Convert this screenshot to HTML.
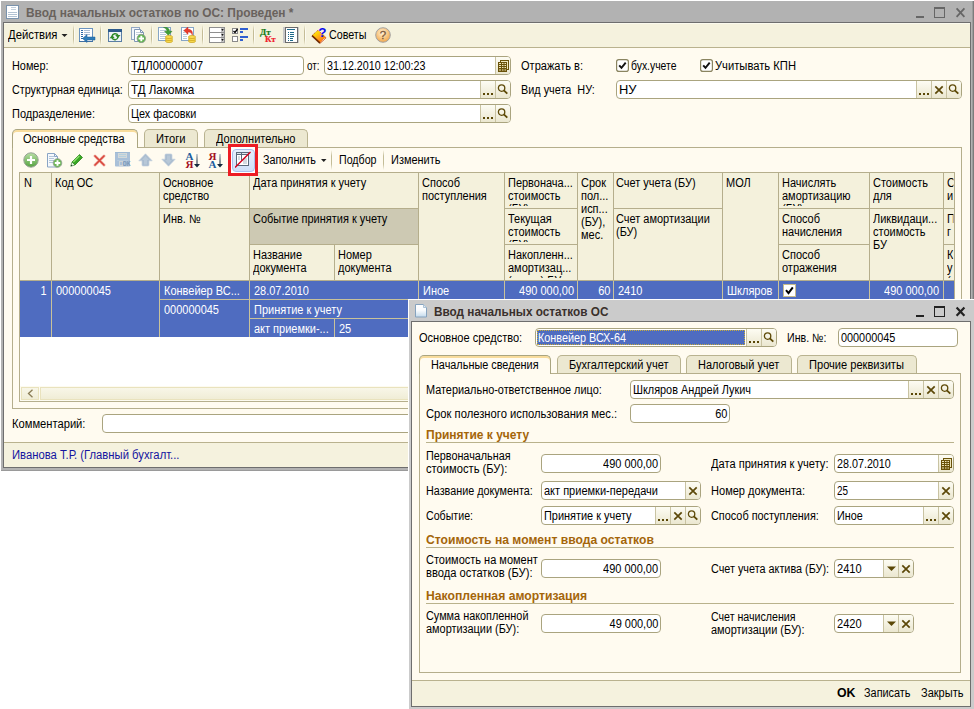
<!DOCTYPE html>
<html lang="ru"><head><meta charset="utf-8"><title>Ввод начальных остатков по ОС</title>
<style>
html,body{margin:0;padding:0;background:#fff;}
body{width:974px;height:709px;position:relative;overflow:hidden;font-family:"Liberation Sans",sans-serif;font-size:12px;color:#000;}
.t{position:absolute;white-space:nowrap;line-height:14px;height:14px;transform-origin:0 0;}
.b{font-weight:bold;}
.f{position:absolute;background:#fff;border:1px solid #aaa47f;border-radius:4px;}
.fb{position:absolute;border-left:1px solid #c9c3a2;background:linear-gradient(#fdfcf3,#ebe7d0);overflow:hidden;}
.fb svg{display:block;}
.h{position:absolute;background:#f4f1dc;}
.ml{position:absolute;line-height:13px;transform-origin:0 0;transform:scaleX(0.915);white-space:nowrap;overflow:hidden;}
.vl{position:absolute;width:1px;background:#b5ae8c;}
.hl{position:absolute;height:1px;background:#b5ae8c;}
.tab{position:absolute;border:1px solid #b9b390;border-bottom:none;border-radius:5px 5px 0 0;background:#ece8d1;}
.tab.a{background:#fffbf0;border-color:#aaa580;box-shadow:inset 0 2px 0 #f8dc9c;}
.pn{position:absolute;border:1px solid #b5ae8c;}
.hd{color:#a4650a;font-weight:bold;}
</style></head><body>

<div class="" style="position:absolute;left:1px;top:1px;width:973px;height:470px;background:#b2b2b2;"></div>
<div class="" style="position:absolute;left:1px;top:470px;width:973px;height:1px;background:#9a9a9a;"></div>
<div class="" style="position:absolute;left:972px;top:1px;width:1px;height:470px;background:#9c9c9c;"></div>
<div class="" style="position:absolute;left:973px;top:1px;width:1px;height:470px;background:#7c7c7c;"></div>
<div class="" style="position:absolute;left:3px;top:22px;width:968px;height:446px;background:#fffbf0;border:1px solid #6e6e6e;box-sizing:border-box;"></div>
<svg style="position:absolute;left:6px;top:5px" width="14" height="15" viewBox="0 0 14 15"><rect x="0.500" y="0.500" width="12" height="13" fill="#fff" stroke="#7a93ad"/><rect x="5" y="2" width="5" height="1" fill="#c3d0dc"/><rect x="5" y="4" width="5" height="1" fill="#c3d0dc"/><rect x="2" y="7" width="9" height="1" fill="#b3c3d3"/><rect x="2" y="9" width="9" height="1" fill="#b3c3d3"/><rect x="2" y="11" width="9" height="1" fill="#b3c3d3"/></svg>
<div class="t b" style="left:26px;top:6px;transform:scaleX(0.991);color:#69625d;">Ввод начальных остатков по ОС: Проведен *</div>
<svg style="position:absolute;left:914px;top:7px" width="56" height="14" viewBox="0 0 56 14"><rect x="2" y="9" width="8" height="2" fill="#666"/><rect x="20.500" y="0.500" width="10" height="10" fill="none" stroke="#666"/><rect x="20" y="0" width="11" height="2" fill="#666"/><path d="M42.600 1.400 L50.400 9.800 M50.400 1.400 L42.600 9.800" stroke="#666" stroke-width="1.8" fill="none"/></svg>
<div class="" style="position:absolute;left:4px;top:23px;width:966px;height:24px;background:#f5f2de;border-top:1px solid #fbfaee;box-sizing:border-box;"></div>
<div class="" style="position:absolute;left:4px;top:47px;width:966px;height:1px;background:#b9b28e;"></div>
<div class="t " style="left:8px;top:28px;transform:scaleX(0.941);">Действия</div>
<svg style="position:absolute;left:61px;top:34px" width="7" height="4"><path d="M0.500 0h6L3.500 3z" fill="#222"/></svg>
<div class="" style="position:absolute;left:73px;top:25px;width:1px;height:20px;background:linear-gradient(rgba(190,182,140,0),#c4bc96 30%,#c4bc96 70%,rgba(190,182,140,0));"></div>
<div class="" style="position:absolute;left:74px;top:25px;width:1px;height:20px;background:linear-gradient(rgba(255,255,255,0),#fdfcf4 30%,#fdfcf4 70%,rgba(255,255,255,0));"></div>
<svg style="position:absolute;left:79px;top:28px" width="17" height="15" viewBox="0 0 17 15"><rect x="0.500" y="0.500" width="13" height="13" fill="#fff" stroke="#6a93bf"/><rect x="0" y="13" width="14" height="1" fill="#3f6fa3"/><rect x="2" y="2" width="2" height="1" fill="#2c6aa8"/><rect x="2" y="4" width="2" height="1" fill="#2c6aa8"/><rect x="2" y="6" width="2" height="1" fill="#2c6aa8"/><rect x="2" y="8" width="2" height="1" fill="#2c6aa8"/><rect x="2" y="10" width="2" height="1" fill="#2c6aa8"/><rect x="5" y="2" width="6" height="1" fill="#a9bdd3"/><rect x="5" y="4" width="6" height="1" fill="#a9bdd3"/><rect x="5" y="6" width="6" height="1" fill="#a9bdd3"/><path d="M16 9v3h-8v2.500l-4.500-4 4.500-4v2.500z" fill="#2f7db8" stroke="#1f5f98" stroke-width="0.500"/></svg>
<div class="" style="position:absolute;left:100px;top:25px;width:1px;height:20px;background:linear-gradient(rgba(190,182,140,0),#c4bc96 30%,#c4bc96 70%,rgba(190,182,140,0));"></div>
<div class="" style="position:absolute;left:101px;top:25px;width:1px;height:20px;background:linear-gradient(rgba(255,255,255,0),#fdfcf4 30%,#fdfcf4 70%,rgba(255,255,255,0));"></div>
<svg style="position:absolute;left:108px;top:29px" width="14" height="13" viewBox="0 0 14 13"><rect x="0.500" y="0.500" width="13" height="12" fill="#edf3f9" stroke="#5b7fa5"/><rect x="0" y="0" width="14" height="3" fill="#2c5a8c"/><path d="M4 7.500a3.200 3.200 0 0 1 6-1" fill="none" stroke="#2f8a2a" stroke-width="1.500"/><path d="M10 8a3.200 3.200 0 0 1-6 1" fill="none" stroke="#2f8a2a" stroke-width="1.500"/><path d="M7.200 6h5.300l-2.600 3.200z" fill="#2f8a2a"/><path d="M1.500 9.300h5.300l-2.600-3.200z" fill="#2f8a2a"/></svg>
<svg style="position:absolute;left:131px;top:27px" width="15" height="16" viewBox="0 0 15 16"><rect x="0.500" y="0.500" width="8" height="12" fill="#f1f5fa" stroke="#93a8c4"/><path d="M3.500 2.500h6l3 3v9h-9z" fill="#fff" stroke="#7f97b5"/><path d="M9.500 2.500v3h3" fill="none" stroke="#7f97b5"/><rect x="5" y="5" width="4" height="1" fill="#c5d0dd"/><rect x="5" y="7" width="4" height="1" fill="#c5d0dd"/><circle cx="10.300" cy="11.500" r="4.200" fill="#5db44a" stroke="#8b9a8b" stroke-width="0.900"/><path d="M10.300 8.800v5.400M7.600 11.500h5.400" stroke="#fff" stroke-width="1.900"/></svg>
<div class="" style="position:absolute;left:151px;top:25px;width:1px;height:20px;background:linear-gradient(rgba(190,182,140,0),#c4bc96 30%,#c4bc96 70%,rgba(190,182,140,0));"></div>
<div class="" style="position:absolute;left:152px;top:25px;width:1px;height:20px;background:linear-gradient(rgba(255,255,255,0),#fdfcf4 30%,#fdfcf4 70%,rgba(255,255,255,0));"></div>
<svg style="position:absolute;left:158px;top:27px" width="16" height="16" viewBox="0 0 16 16"><rect x="0.500" y="0.500" width="12" height="13" fill="#fff" stroke="#86a5c6"/><rect x="2" y="3" width="6" height="1" fill="#b9cadb"/><rect x="2" y="5" width="6" height="1" fill="#b9cadb"/><rect x="2" y="7" width="6" height="1" fill="#b9cadb"/><rect x="2" y="9" width="6" height="1" fill="#b9cadb"/><rect x="2" y="11" width="6" height="1" fill="#b9cadb"/><path d="M5.500 0.300c4.500-0.300 6 1.800 6 4h2.500l-3.700 4-3.700-4h2.300c0-1.500-1-3-3.400-4z" fill="#3f9e36" stroke="#2a7a22" stroke-width="0.500"/><ellipse cx="11" cy="14" rx="3.600" ry="1.600" fill="#f8da4e" stroke="#c9a11a" stroke-width="0.700"/><ellipse cx="11" cy="12" rx="3.600" ry="1.600" fill="#f8da4e" stroke="#c9a11a" stroke-width="0.700"/><ellipse cx="11" cy="10" rx="3.600" ry="1.600" fill="#f8da4e" stroke="#c9a11a" stroke-width="0.700"/></svg>
<svg style="position:absolute;left:181px;top:27px" width="16" height="16" viewBox="0 0 16 16"><rect x="0.500" y="0.500" width="12" height="13" fill="#fff" stroke="#86a5c6"/><rect x="2" y="7" width="4" height="1" fill="#b9cadb"/><rect x="2" y="9" width="4" height="1" fill="#b9cadb"/><rect x="2" y="11" width="4" height="1" fill="#b9cadb"/><rect x="2" y="3" width="2" height="1" fill="#b9cadb"/><rect x="2" y="5" width="2" height="1" fill="#b9cadb"/><path d="M2.800 3.600l4.200-3.600v2.300c3.500 0 5 2.200 4.300 6c-0.600-2.200-1.800-3.200-4.300-3.200v2.400z" fill="#e83a2c" stroke="#c02015" stroke-width="0.400"/><ellipse cx="11" cy="14" rx="3.600" ry="1.600" fill="#f8da4e" stroke="#c9a11a" stroke-width="0.700"/><ellipse cx="11" cy="12" rx="3.600" ry="1.600" fill="#f8da4e" stroke="#c9a11a" stroke-width="0.700"/><ellipse cx="11" cy="10" rx="3.600" ry="1.600" fill="#f8da4e" stroke="#c9a11a" stroke-width="0.700"/></svg>
<div class="" style="position:absolute;left:202px;top:25px;width:1px;height:20px;background:linear-gradient(rgba(190,182,140,0),#c4bc96 30%,#c4bc96 70%,rgba(190,182,140,0));"></div>
<div class="" style="position:absolute;left:203px;top:25px;width:1px;height:20px;background:linear-gradient(rgba(255,255,255,0),#fdfcf4 30%,#fdfcf4 70%,rgba(255,255,255,0));"></div>
<svg style="position:absolute;left:209px;top:27px" width="16" height="16" viewBox="0 0 16 16"><rect x="0" y="0" width="16" height="16" fill="#8f8f8f"/><rect x="1" y="1" width="11" height="4" fill="#fff"/><rect x="12" y="1" width="3" height="4" fill="#c4c4c4"/><path d="M12.300 2h2.400l-1.200 2z" fill="#111"/><rect x="1" y="6" width="11" height="4" fill="#fff"/><rect x="12" y="6" width="3" height="4" fill="#c4c4c4"/><path d="M12.300 7h2.400l-1.200 2z" fill="#111"/><rect x="1" y="11" width="11" height="4" fill="#fff"/><rect x="12" y="11" width="3" height="4" fill="#c4c4c4"/><path d="M12.300 12h2.400l-1.200 2z" fill="#111"/></svg>
<svg style="position:absolute;left:232px;top:28px" width="17" height="14" viewBox="0 0 17 14"><rect x="0.500" y="0.500" width="5" height="5" fill="#fff" stroke="#8a8a8a"/><path d="M1.500 3l1.500 1.500 2.500-3.500" stroke="#000" stroke-width="1.300" fill="none"/><rect x="0.500" y="8.500" width="5" height="5" fill="#fff" stroke="#8a8a8a"/><rect x="8" y="0" width="8" height="2" fill="#2f5fd0"/><rect x="8" y="3" width="3" height="2" fill="#2f5fd0"/><rect x="8" y="8" width="8" height="2" fill="#2f5fd0"/><rect x="8" y="11" width="3" height="2" fill="#2f5fd0"/></svg>
<div class="" style="position:absolute;left:253px;top:25px;width:1px;height:20px;background:linear-gradient(rgba(190,182,140,0),#c4bc96 30%,#c4bc96 70%,rgba(190,182,140,0));"></div>
<div class="" style="position:absolute;left:254px;top:25px;width:1px;height:20px;background:linear-gradient(rgba(255,255,255,0),#fdfcf4 30%,#fdfcf4 70%,rgba(255,255,255,0));"></div>
<svg style="position:absolute;left:259px;top:27px" width="18" height="16" viewBox="0 0 18 16"><text x="1" y="8" font-family="Liberation Serif, serif" font-weight="bold" font-size="9" fill="#157a18" stroke="#157a18" stroke-width="0.200">Дт</text><text x="6" y="15" font-family="Liberation Serif, serif" font-weight="bold" font-size="9" fill="#f0202c" stroke="#f0202c" stroke-width="0.200">Кт</text></svg>
<svg style="position:absolute;left:283px;top:27px" width="16" height="16" viewBox="0 0 16 16"><rect x="0" y="0" width="16" height="16" fill="#c9c9c9"/><rect x="2.500" y="0.500" width="12" height="15" fill="#fff" stroke="#6a6a6a"/><rect x="4" y="2" width="8" height="1" fill="#1f6a8a"/><rect x="7" y="5" width="4" height="1" fill="#1f6a8a"/><rect x="7" y="7" width="4" height="1" fill="#1f6a8a"/><rect x="7" y="9" width="4" height="1" fill="#1f6a8a"/><rect x="7" y="11" width="3" height="1" fill="#1f6a8a"/><rect x="7" y="13" width="3" height="1" fill="#1f6a8a"/><rect x="5" y="5" width="1" height="1" fill="#1f6a8a"/><rect x="5" y="7" width="1" height="1" fill="#1f6a8a"/><rect x="5" y="9" width="1" height="1" fill="#1f6a8a"/><rect x="5" y="11" width="1" height="1" fill="#1f6a8a"/><rect x="5" y="13" width="1" height="1" fill="#1f6a8a"/></svg>
<div class="" style="position:absolute;left:304px;top:25px;width:1px;height:20px;background:linear-gradient(rgba(190,182,140,0),#c4bc96 30%,#c4bc96 70%,rgba(190,182,140,0));"></div>
<div class="" style="position:absolute;left:305px;top:25px;width:1px;height:20px;background:linear-gradient(rgba(255,255,255,0),#fdfcf4 30%,#fdfcf4 70%,rgba(255,255,255,0));"></div>
<svg style="position:absolute;left:311px;top:26px" width="16" height="18" viewBox="0 0 16 18"><defs><linearGradient id="bk" x1="0.2" y1="0.1" x2="0.8" y2="0.9"><stop offset="0" stop-color="#fff200"/><stop offset="0.5" stop-color="#ffa818"/><stop offset="1" stop-color="#ff6a10"/></linearGradient></defs><path d="M7 4.200L1 9.500l8 7.500 6-5.500z" fill="url(#bk)" stroke="#c8501a" stroke-width="0.800" stroke-dasharray="1.200 0.800"/><path d="M1 9.700l8 7.500" stroke="#6e2800" stroke-width="1.600"/><path d="M10 16.600l5-4.600" stroke="#fff" stroke-width="1.400" stroke-dasharray="1 0.700"/><path d="M9.200 17.400l6-5.500" stroke="#c8501a" stroke-width="0.700"/><text x="7.300" y="10.800" font-family="Liberation Sans, sans-serif" font-weight="bold" font-size="13.500" fill="#0a0aee">?</text></svg>
<div class="t " style="left:329px;top:28px;transform:scaleX(0.893);">Советы</div>
<svg style="position:absolute;left:375px;top:27px" width="16" height="16" viewBox="0 0 16 16"><defs><radialGradient id="hg" cx="0.45" cy="0.35" r="0.75"><stop offset="0" stop-color="#fff2d8"/><stop offset="0.55" stop-color="#f8c27a"/><stop offset="1" stop-color="#ec9c3c"/></radialGradient></defs><circle cx="8" cy="8" r="7.300" fill="url(#hg)" stroke="#a3a3a3" stroke-width="1"/><text x="8" y="12" text-anchor="middle" font-family="Liberation Sans, sans-serif" font-size="11.500" fill="#7c5a3c" stroke="#7c5a3c" stroke-width="0.300">?</text></svg>
<div class="t " style="left:12px;top:59px;transform:scaleX(0.906);">Номер:</div>
<div class="f" style="left:128px;top:56px;width:174px;height:17px"></div>
<div class="t " style="left:131px;top:59px;transform:scaleX(0.943);">ТДЛ00000007</div>
<div class="t " style="left:307px;top:59px;transform:scaleX(0.82);">от:</div>
<div class="f" style="left:324px;top:56px;width:185px;height:17px"></div>
<div class="fb" style="left:495px;top:57px;width:14px;height:17px;border-radius:0 3px 3px 0;"><svg width="14" height="17" viewBox="0 0 14 17"><rect x="4.500" y="3.500" width="8" height="9" fill="#efe6bb" stroke="#6a5208"/><rect x="2.500" y="5.500" width="8" height="9" fill="#efe6bb" stroke="#6a5208"/><path d="M2.500 7.500h8M2.500 9.500h8M2.500 11.500h8M2.500 13h8M5.500 5.500v9M8 5.500v9" stroke="#6a5208" stroke-width="1"/></svg></div>
<div class="t " style="left:327px;top:59px;transform:scaleX(0.894);">31.12.2010 12:00:23</div>
<div class="t " style="left:521px;top:59px;transform:scaleX(0.92);">Отражать в:</div>
<svg style="position:absolute;left:616px;top:59px" width="13" height="13" viewBox="0 0 13 13"><rect x="0.600" y="0.600" width="11.800" height="11.800" rx="2.200" fill="#fff" stroke="#8a8460" stroke-width="1.200"/><path d="M3.200 6.300l2.300 2.600 4.200-5.200" stroke="#111" stroke-width="1.900" fill="none"/></svg>
<div class="t " style="left:631px;top:59px;transform:scaleX(0.866);">бух.учете</div>
<svg style="position:absolute;left:700px;top:59px" width="13" height="13" viewBox="0 0 13 13"><rect x="0.600" y="0.600" width="11.800" height="11.800" rx="2.200" fill="#fff" stroke="#8a8460" stroke-width="1.200"/><path d="M3.200 6.300l2.300 2.600 4.200-5.200" stroke="#111" stroke-width="1.900" fill="none"/></svg>
<div class="t " style="left:715px;top:59px;transform:scaleX(0.934);">Учитывать КПН</div>
<div class="t " style="left:12px;top:83px;transform:scaleX(0.896);">Структурная единица:</div>
<div class="f" style="left:128px;top:80px;width:381px;height:17px"></div>
<div class="fb" style="left:480px;top:81px;width:14px;height:17px;"><svg width="14" height="17" viewBox="0 0 14 17"><rect x="2" y="12" width="2" height="2" fill="#5a4706"/><rect x="6" y="12" width="2" height="2" fill="#5a4706"/><rect x="10" y="12" width="2" height="2" fill="#5a4706"/></svg></div>
<div class="fb" style="left:495px;top:81px;width:14px;height:17px;border-radius:0 3px 3px 0;"><svg width="14" height="17" viewBox="0 0 14 17"><circle cx="5.600" cy="7.100" r="3.200" stroke="#5e4a08" stroke-width="1.300" fill="none"/><path d="M7.800 9.400 L11.300 12.600" stroke="#5e4a08" stroke-width="1.900"/></svg></div>
<div class="t " style="left:131px;top:83px;transform:scaleX(0.966);">ТД Лакомка</div>
<div class="t " style="left:521px;top:83px;transform:scaleX(0.904);">Вид учета&nbsp; НУ:</div>
<div class="f" style="left:616px;top:80px;width:344px;height:17px"></div>
<div class="fb" style="left:916px;top:81px;width:14px;height:17px;"><svg width="14" height="17" viewBox="0 0 14 17"><rect x="2" y="12" width="2" height="2" fill="#5a4706"/><rect x="6" y="12" width="2" height="2" fill="#5a4706"/><rect x="10" y="12" width="2" height="2" fill="#5a4706"/></svg></div>
<div class="fb" style="left:931px;top:81px;width:14px;height:17px;"><svg width="14" height="17" viewBox="0 0 14 17"><path d="M3.300 5.300 L10.700 12.700 M10.700 5.300 L3.300 12.700" stroke="#5c4808" stroke-width="1.700" fill="none"/></svg></div>
<div class="fb" style="left:946px;top:81px;width:14px;height:17px;border-radius:0 3px 3px 0;"><svg width="14" height="17" viewBox="0 0 14 17"><circle cx="5.600" cy="7.100" r="3.200" stroke="#5e4a08" stroke-width="1.300" fill="none"/><path d="M7.800 9.400 L11.300 12.600" stroke="#5e4a08" stroke-width="1.900"/></svg></div>
<div class="t " style="left:619px;top:83px;transform:scaleX(1.074);">НУ</div>
<div class="t " style="left:12px;top:107px;transform:scaleX(0.914);">Подразделение:</div>
<div class="f" style="left:128px;top:104px;width:381px;height:17px"></div>
<div class="fb" style="left:480px;top:105px;width:14px;height:17px;"><svg width="14" height="17" viewBox="0 0 14 17"><rect x="2" y="12" width="2" height="2" fill="#5a4706"/><rect x="6" y="12" width="2" height="2" fill="#5a4706"/><rect x="10" y="12" width="2" height="2" fill="#5a4706"/></svg></div>
<div class="fb" style="left:495px;top:105px;width:14px;height:17px;border-radius:0 3px 3px 0;"><svg width="14" height="17" viewBox="0 0 14 17"><circle cx="5.600" cy="7.100" r="3.200" stroke="#5e4a08" stroke-width="1.300" fill="none"/><path d="M7.800 9.400 L11.300 12.600" stroke="#5e4a08" stroke-width="1.900"/></svg></div>
<div class="t " style="left:131px;top:107px;transform:scaleX(0.902);">Цех фасовки</div>
<div class="pn" style="left:12px;top:147px;width:948px;height:260px"></div>
<div class="tab" style="left:144px;top:129px;width:52px;height:17px"></div>
<div class="t " style="left:156px;top:132px;transform:scaleX(0.929);">Итоги</div>
<div class="tab" style="left:204px;top:129px;width:102px;height:17px"></div>
<div class="t " style="left:216px;top:132px;transform:scaleX(0.92);">Дополнительно</div>
<div class="tab a" style="left:12px;top:129px;width:124px;height:18px"></div>
<div class="t " style="left:23px;top:132px;transform:scaleX(0.918);">Основные средства</div>
<svg style="position:absolute;left:23px;top:152px" width="16" height="16" viewBox="0 0 16 16"><defs><linearGradient id="gp" x1="0" y1="0" x2="0" y2="1"><stop offset="0" stop-color="#b9e0a6"/><stop offset="1" stop-color="#55a23f"/></linearGradient></defs><circle cx="8" cy="8" r="7.200" fill="url(#gp)" stroke="#98a296" stroke-width="1"/><path d="M8 4v8M4 8h8" stroke="#fff" stroke-width="2.200"/></svg>
<svg style="position:absolute;left:47px;top:153px" width="16" height="15" viewBox="0 0 16 15"><path d="M0.500 0.500h7l3 3v10.500h-10z" fill="#f6f9fc" stroke="#8aa5c5"/><path d="M7.500 0.500v3h3" fill="none" stroke="#8aa5c5"/><rect x="2" y="3" width="5" height="1" fill="#b4c6da"/><rect x="2" y="5" width="5" height="1" fill="#b4c6da"/><rect x="2" y="7" width="5" height="1" fill="#b4c6da"/><rect x="2" y="9" width="5" height="1" fill="#b4c6da"/><circle cx="10.500" cy="10" r="4.300" fill="#6cb856" stroke="#93a093" stroke-width="0.900"/><path d="M10.500 7.300v5.400M7.800 10h5.400" stroke="#fff" stroke-width="1.900"/></svg>
<svg style="position:absolute;left:70px;top:154px" width="13" height="13" viewBox="0 0 13 13"><path d="M9.500 0.500l3 3-7.500 7.500-3-3z" fill="#38a723" stroke="#1d7a10" stroke-width="0.700"/><path d="M2 8l3 3-4.200 1.200z" fill="#e9f5e4" stroke="#1d7a10" stroke-width="0.600"/><path d="M0.800 12.200l1.500-0.400-1-1z" fill="#123"/><path d="M9.300 2l-6 6" stroke="#8fe070" stroke-width="1.200"/></svg>
<svg style="position:absolute;left:93px;top:154px" width="13" height="13" viewBox="0 0 13 13"><path d="M2 2l9 9M11 2l-9 9" stroke="#e8867c" stroke-width="3" stroke-linecap="round" opacity="0.550"/><path d="M2 2l9 9M11 2l-9 9" stroke="#d9463c" stroke-width="1.700" stroke-linecap="round"/></svg>
<svg style="position:absolute;left:115px;top:152px" width="16" height="15" viewBox="0 0 16 15"><rect x="0" y="0" width="15" height="14.500" rx="0.800" fill="#a9c0d8"/><rect x="0" y="0" width="15" height="1" fill="#9fbad4"/><rect x="3" y="1" width="9" height="5" fill="#d3d8d9"/><rect x="4" y="2" width="7" height="1" fill="#b5d0de"/><rect x="4" y="4" width="7" height="1" fill="#b5d0de"/><rect x="2" y="8" width="11" height="1" fill="#b5c9dc"/><rect x="4" y="9" width="4" height="5" fill="#cfd5d8"/><rect x="5" y="10" width="2" height="3" fill="#a9c0d8"/><text x="7.500" y="14.300" font-family="Liberation Sans, sans-serif" font-weight="bold" font-size="7" fill="#7b98b7" textLength="8" lengthAdjust="spacingAndGlyphs">OK</text></svg>
<svg style="position:absolute;left:138px;top:153px" width="15" height="14" viewBox="0 0 15 14"><path d="M7.500 0.800l6.700 7h-3.200v4.200q0 1-1 1h-5q-1 0-1-1v-4.200h-3.200z" fill="#a9bccf" stroke="#c3d0de" stroke-width="0.700"/><path d="M7.500 3l3.500 4h-2v4.500h-3v-4.500h-2z" fill="#b7c7d7"/></svg>
<svg style="position:absolute;left:161px;top:153px" width="15" height="14" viewBox="0 0 15 14"><path d="M7.500 13.200l6.700-7h-3.200v-4.200q0-1-1-1h-5q-1 0-1 1v4.200h-3.200z" fill="#a9bccf" stroke="#c3d0de" stroke-width="0.700"/><path d="M7.500 11l3.500-4h-2v-4.500h-3v4.500h-2z" fill="#b7c7d7"/></svg>
<svg style="position:absolute;left:185px;top:152px" width="16" height="17" viewBox="0 0 16 17"><defs><linearGradient id="sa185" x1="0" y1="0" x2="0" y2="1"><stop offset="0" stop-color="#8ea0b4"/><stop offset="0.6" stop-color="#14283c"/></linearGradient></defs><text x="0.500" y="7.800" font-family="Liberation Serif, serif" font-weight="bold" font-size="11" fill="#1d5d9e">А</text><text x="0.500" y="15.800" font-family="Liberation Serif, serif" font-weight="bold" font-size="11" fill="#a3101e">Я</text><rect x="11.500" y="2" width="1" height="12" fill="url(#sa185)"/><path d="M9 12h6l-3 3.600z" fill="#14283c"/></svg>
<svg style="position:absolute;left:208px;top:152px" width="16" height="17" viewBox="0 0 16 17"><defs><linearGradient id="sa208" x1="0" y1="0" x2="0" y2="1"><stop offset="0" stop-color="#8ea0b4"/><stop offset="0.6" stop-color="#14283c"/></linearGradient></defs><text x="0.500" y="7.800" font-family="Liberation Serif, serif" font-weight="bold" font-size="11" fill="#a3101e">Я</text><text x="0.500" y="15.800" font-family="Liberation Serif, serif" font-weight="bold" font-size="11" fill="#1d5d9e">А</text><rect x="11.500" y="2" width="1" height="12" fill="url(#sa208)"/><path d="M9 12h6l-3 3.600z" fill="#14283c"/></svg>
<div class="t " style="left:263px;top:153px;transform:scaleX(0.899);">Заполнить</div>
<svg style="position:absolute;left:321px;top:159px" width="6" height="3"><path d="M0 0h5.500L2.750 3z" fill="#222"/></svg>
<div class="" style="position:absolute;left:331px;top:150px;width:1px;height:20px;background:linear-gradient(rgba(190,182,140,0),#c4bc96 30%,#c4bc96 70%,rgba(190,182,140,0));"></div>
<div class="" style="position:absolute;left:332px;top:150px;width:1px;height:20px;background:linear-gradient(rgba(255,255,255,0),#fdfcf4 30%,#fdfcf4 70%,rgba(255,255,255,0));"></div>
<div class="t " style="left:339px;top:153px;transform:scaleX(0.887);">Подбор</div>
<div class="" style="position:absolute;left:383px;top:150px;width:1px;height:20px;background:linear-gradient(rgba(190,182,140,0),#c4bc96 30%,#c4bc96 70%,rgba(190,182,140,0));"></div>
<div class="" style="position:absolute;left:384px;top:150px;width:1px;height:20px;background:linear-gradient(rgba(255,255,255,0),#fdfcf4 30%,#fdfcf4 70%,rgba(255,255,255,0));"></div>
<div class="t " style="left:391px;top:153px;transform:scaleX(0.914);">Изменить</div>
<div class="" style="position:absolute;left:19px;top:172px;width:936px;height:230px;background:#fff;border:1px solid #b5ae8c;box-sizing:border-box;"></div>
<div class="h" style="position:absolute;left:20px;top:173px;width:934px;height:108px;"></div>
<div class="" style="position:absolute;left:250px;top:209px;width:168px;height:35px;background:#cdc9b3;"></div>
<div class="vl" style="left:51px;top:173px;height:108px"></div>
<div class="vl" style="left:159px;top:173px;height:108px"></div>
<div class="vl" style="left:249px;top:173px;height:108px"></div>
<div class="vl" style="left:418px;top:173px;height:108px"></div>
<div class="vl" style="left:504px;top:173px;height:108px"></div>
<div class="vl" style="left:577px;top:173px;height:108px"></div>
<div class="vl" style="left:613px;top:173px;height:108px"></div>
<div class="vl" style="left:722px;top:173px;height:108px"></div>
<div class="vl" style="left:778px;top:173px;height:108px"></div>
<div class="vl" style="left:869px;top:173px;height:108px"></div>
<div class="vl" style="left:943px;top:173px;height:108px"></div>
<div class="vl" style="left:334px;top:245px;height:36px"></div>
<div class="hl" style="left:160px;top:208px;width:258px"></div>
<div class="hl" style="left:250px;top:244px;width:168px"></div>
<div class="hl" style="left:505px;top:208px;width:72px"></div>
<div class="hl" style="left:505px;top:244px;width:72px"></div>
<div class="hl" style="left:614px;top:208px;width:108px"></div>
<div class="hl" style="left:779px;top:208px;width:90px"></div>
<div class="hl" style="left:779px;top:244px;width:90px"></div>
<div class="hl" style="left:870px;top:208px;width:73px"></div>
<div class="hl" style="left:944px;top:208px;width:10px"></div>
<div class="hl" style="left:944px;top:244px;width:10px"></div>
<div class="hl" style="left:20px;top:280px;width:934px"></div>
<div class="ml" style="left:24px;top:177px;width:26px;height:14px">N</div>
<div class="ml" style="left:55px;top:177px;width:109px;height:14px">Код ОС</div>
<div class="ml" style="left:163px;top:177px;width:91px;height:27px">Основное<br>средство</div>
<div class="ml" style="left:163px;top:213px;width:91px;height:14px">Инв. №</div>
<div class="ml" style="left:253px;top:177px;width:174px;height:14px">Дата принятия к учету</div>
<div class="ml" style="left:253px;top:213px;width:174px;height:14px">Событие принятия к учету</div>
<div class="ml" style="left:253px;top:249px;width:85px;height:27px">Название<br>документа</div>
<div class="ml" style="left:338px;top:249px;width:85px;height:27px">Номер<br>документа</div>
<div class="ml" style="left:422px;top:177px;width:91px;height:27px">Способ<br>поступления</div>
<div class="ml" style="left:508px;top:177px;width:74px;height:29px">Первонача...<br>стоимость<br>(БУ)</div>
<div class="ml" style="left:508px;top:213px;width:74px;height:29px">Текущая<br>стоимость<br>(БУ)</div>
<div class="ml" style="left:508px;top:249px;width:74px;height:29px">Накопленн...<br>амортизац...<br>(износ) БУ</div>
<div class="ml" style="left:581px;top:177px;width:34px;height:66px">Срок<br>пол...<br>исп...<br>(БУ),<br>мес.</div>
<div class="ml" style="left:616px;top:177px;width:113px;height:14px">Счет учета (БУ)</div>
<div class="ml" style="left:616px;top:213px;width:113px;height:27px">Счет амортизации<br>(БУ)</div>
<div class="ml" style="left:726px;top:177px;width:54px;height:14px">МОЛ</div>
<div class="ml" style="left:782px;top:177px;width:93px;height:29px">Начислять<br>амортизацию<br>(БУ)</div>
<div class="ml" style="left:782px;top:213px;width:93px;height:27px">Способ<br>начисления</div>
<div class="ml" style="left:782px;top:249px;width:93px;height:27px">Способ<br>отражения</div>
<div class="ml" style="left:873px;top:177px;width:76px;height:27px">Стоимость<br>для</div>
<div class="ml" style="left:873px;top:213px;width:76px;height:40px">Ликвидаци...<br>стоимость<br>БУ</div>
<div class="ml" style="left:947px;top:177px;width:7px;height:27px">С<br>и</div>
<div class="ml" style="left:947px;top:213px;width:7px;height:27px">П<br>г</div>
<div class="ml" style="left:947px;top:249px;width:7px;height:29px">К<br>у<br>(</div>
<div class="" style="position:absolute;left:20px;top:281px;width:934px;height:56px;background:#4f6cc0;"></div>
<div class="vl" style="left:51px;top:281px;height:56px;background:#c9c29a"></div>
<div class="vl" style="left:159px;top:281px;height:56px;background:#c9c29a"></div>
<div class="vl" style="left:249px;top:281px;height:56px;background:#c9c29a"></div>
<div class="vl" style="left:418px;top:281px;height:56px;background:#c9c29a"></div>
<div class="vl" style="left:504px;top:281px;height:56px;background:#c9c29a"></div>
<div class="vl" style="left:577px;top:281px;height:56px;background:#c9c29a"></div>
<div class="vl" style="left:613px;top:281px;height:56px;background:#c9c29a"></div>
<div class="vl" style="left:722px;top:281px;height:56px;background:#c9c29a"></div>
<div class="vl" style="left:778px;top:281px;height:56px;background:#c9c29a"></div>
<div class="vl" style="left:869px;top:281px;height:56px;background:#c9c29a"></div>
<div class="vl" style="left:943px;top:281px;height:56px;background:#c9c29a"></div>
<div class="vl" style="left:334px;top:319px;height:18px;background:#c9c29a"></div>
<div class="hl" style="left:160px;top:299px;width:258px;background:#c9c29a"></div>
<div class="hl" style="left:250px;top:318px;width:168px;background:#c9c29a"></div>
<div class="hl" style="left:505px;top:299px;width:72px;background:#c9c29a"></div>
<div class="hl" style="left:505px;top:318px;width:72px;background:#c9c29a"></div>
<div class="hl" style="left:614px;top:299px;width:108px;background:#c9c29a"></div>
<div class="hl" style="left:779px;top:299px;width:175px;background:#c9c29a"></div>
<div class="hl" style="left:779px;top:318px;width:90px;background:#c9c29a"></div>
<div class="hl" style="left:944px;top:318px;width:10px;background:#c9c29a"></div>
<div class="t " style="right:927px;top:284px;transform-origin:100% 0;transform:scaleX(0.915);color:#fff;">1</div>
<div class="t " style="left:56px;top:284px;transform:scaleX(0.915);color:#fff;">000000045</div>
<div class="t " style="left:164px;top:284px;transform:scaleX(0.915);color:#fff;">Конвейер ВС...</div>
<div class="t " style="left:164px;top:303px;transform:scaleX(0.915);color:#fff;">000000045</div>
<div class="t " style="left:254px;top:284px;transform:scaleX(0.915);color:#fff;">28.07.2010</div>
<div class="t " style="left:254px;top:303px;transform:scaleX(0.915);color:#fff;">Принятие к учету</div>
<div class="t " style="left:254px;top:322px;transform:scaleX(0.915);color:#fff;">акт приемки-...</div>
<div class="t " style="left:339px;top:322px;transform:scaleX(0.915);color:#fff;">25</div>
<div class="t " style="left:423px;top:284px;transform:scaleX(0.915);color:#fff;">Иное</div>
<div class="t " style="right:400px;top:284px;transform-origin:100% 0;transform:scaleX(0.915);color:#fff;">490 000,00</div>
<div class="t " style="right:364px;top:284px;transform-origin:100% 0;transform:scaleX(0.915);color:#fff;">60</div>
<div class="t " style="left:618px;top:284px;transform:scaleX(0.915);color:#fff;">2410</div>
<div class="t " style="left:727px;top:284px;transform:scaleX(0.915);color:#fff;">Шкляров</div>
<svg style="position:absolute;left:783px;top:284px" width="13" height="13" viewBox="0 0 13 13"><rect x="0.500" y="0.500" width="12" height="12" fill="#fff" stroke="#c6bb8c"/><path d="M3 6.200l2.500 3 4.300-5.800" stroke="#000" stroke-width="2" fill="none"/></svg>
<div class="t " style="right:35px;top:284px;transform-origin:100% 0;transform:scaleX(0.915);color:#fff;">490 000,00</div>
<div class="" style="position:absolute;left:231px;top:147px;width:24px;height:26px;background:#fff;"></div>
<div class="" style="position:absolute;left:232px;top:149px;width:21px;height:21px;background:linear-gradient(#e6effd,#cfe0f8);border:1px solid #a9c0ee;border-radius:4px;"></div>
<svg style="position:absolute;left:235px;top:151px" width="16" height="17" viewBox="0 0 16 17"><rect x="1.500" y="1.500" width="12" height="13" fill="#fff" stroke="#5a6a7c"/><rect x="1.500" y="1.500" width="12" height="2" fill="#dfe6ee" stroke="#5a6a7c"/><path d="M6.500 1.500v8" stroke="#5a6a7c"/><path d="M3 6h2M3 8h2M8 8h4M8 10h4M8 12h4" stroke="#aab6c4"/><path d="M0 16.500l15.500-15.500" stroke="#d4001c" stroke-width="1.400"/></svg>
<div class="" style="position:absolute;left:228px;top:144px;width:24px;height:26px;border:3px solid #ed1c24;"></div>
<div class="" style="position:absolute;left:20px;top:386px;width:934px;height:15px;background:#fdfbf0;"></div>
<div class="" style="position:absolute;left:21px;top:387px;width:18px;height:13px;background:linear-gradient(#f8f6e8,#f0edd6);border:1px solid #e9e2bd;box-sizing:border-box;"></div>
<svg style="position:absolute;left:27px;top:389px" width="7" height="9"><path d="M5.500 0.800L1.500 4.500l4 3.700" stroke="#8a7c55" stroke-width="1.300" fill="none"/></svg>
<div class="" style="position:absolute;left:40px;top:387px;width:913px;height:13px;background:linear-gradient(#f8f6e8,#f0edd6);border:1px solid #e9e2bd;box-sizing:border-box;"></div>
<div class="t " style="left:12px;top:417px;transform:scaleX(0.931);">Комментарий:</div>
<div class="f" style="left:102px;top:414px;width:858px;height:17px"></div>
<div class="" style="position:absolute;left:4px;top:442px;width:966px;height:1px;background:#b9b28e;"></div>
<div class="" style="position:absolute;left:4px;top:443px;width:966px;height:24px;background:#f5f2de;"></div>
<div class="t " style="left:12px;top:448px;transform:scaleX(0.938);color:#1414a0;">Иванова Т.Р. (Главный бухгалт...</div>
<div class="" style="position:absolute;left:408px;top:299px;width:566px;height:410px;background:#fff;"></div>
<div class="" style="position:absolute;left:409px;top:300px;width:565px;height:409px;background:#cbcbcb;"></div>
<div class="" style="position:absolute;left:411px;top:321px;width:560px;height:386px;background:#fffbf0;border:1px solid #6e6e6e;box-sizing:border-box;"></div>
<svg style="position:absolute;left:415px;top:304px" width="13" height="14" viewBox="0 0 13 14"><defs><linearGradient id="dg" x1="0" y1="0" x2="0" y2="1"><stop offset="0" stop-color="#fff"/><stop offset="0.45" stop-color="#fafcfe"/><stop offset="1" stop-color="#c3daec"/></linearGradient></defs><path d="M0.500 0.500h8l3 3v9.500h-11z" fill="url(#dg)" stroke="#86a3be"/><path d="M8.500 0.500v3h3" fill="#dce8f2" stroke="#9db6cc" stroke-width="0.800"/></svg>
<div class="t b" style="left:434px;top:305px;transform:scaleX(0.98);color:#3a302c;">Ввод начальных остатков ОС</div>
<svg style="position:absolute;left:914px;top:306px" width="56" height="14" viewBox="0 0 56 14"><rect x="2" y="9" width="8" height="2" fill="#222"/><rect x="20.500" y="0.500" width="10" height="10" fill="none" stroke="#222"/><rect x="20" y="0" width="11" height="2" fill="#222"/><path d="M42.600 1.400 L50.400 9.800 M50.400 1.400 L42.600 9.800" stroke="#222" stroke-width="2.2" fill="none"/></svg>
<div class="t " style="left:419px;top:331px;transform:scaleX(0.92);">Основное средство:</div>
<div class="f" style="left:535px;top:328px;width:240px;height:17px"></div>
<div class="fb" style="left:746px;top:329px;width:14px;height:17px;"><svg width="14" height="17" viewBox="0 0 14 17"><rect x="2" y="12" width="2" height="2" fill="#5a4706"/><rect x="6" y="12" width="2" height="2" fill="#5a4706"/><rect x="10" y="12" width="2" height="2" fill="#5a4706"/></svg></div>
<div class="fb" style="left:761px;top:329px;width:14px;height:17px;border-radius:0 3px 3px 0;"><svg width="14" height="17" viewBox="0 0 14 17"><circle cx="5.600" cy="7.100" r="3.200" stroke="#5e4a08" stroke-width="1.300" fill="none"/><path d="M7.800 9.400 L11.300 12.600" stroke="#5e4a08" stroke-width="1.900"/></svg></div>
<div style="position:absolute;left:537px;top:330px;width:208px;height:15px;background:#4f6cc0;border:1px dotted #c9ad3a;box-sizing:border-box"></div>
<div class="t " style="left:538px;top:331px;transform:scaleX(0.902);color:#fff;">Конвейер ВСХ-64</div>
<div class="t " style="left:787px;top:331px;transform:scaleX(0.887);">Инв. №:</div>
<div class="f" style="left:838px;top:328px;width:118px;height:17px"></div>
<div class="t " style="left:841px;top:331px;transform:scaleX(0.904);">000000045</div>
<div class="pn" style="left:419px;top:373px;width:540px;height:298px"></div>
<div class="tab" style="left:557px;top:355px;width:122px;height:17px"></div>
<div class="t " style="left:569px;top:358px;transform:scaleX(0.92);">Бухгалтерский учет</div>
<div class="tab" style="left:686px;top:355px;width:104px;height:17px"></div>
<div class="t " style="left:698px;top:358px;transform:scaleX(0.914);">Налоговый учет</div>
<div class="tab" style="left:797px;top:355px;width:118px;height:17px"></div>
<div class="t " style="left:809px;top:358px;transform:scaleX(0.924);">Прочие реквизиты</div>
<div class="tab a" style="left:419px;top:355px;width:130px;height:18px"></div>
<div class="t " style="left:431px;top:358px;transform:scaleX(0.906);">Начальные сведения</div>
<div class="t " style="left:426px;top:383px;transform:scaleX(0.907);">Материально-ответственное лицо:</div>
<div class="f" style="left:630px;top:380px;width:322px;height:17px"></div>
<div class="fb" style="left:908px;top:381px;width:14px;height:17px;"><svg width="14" height="17" viewBox="0 0 14 17"><rect x="2" y="12" width="2" height="2" fill="#5a4706"/><rect x="6" y="12" width="2" height="2" fill="#5a4706"/><rect x="10" y="12" width="2" height="2" fill="#5a4706"/></svg></div>
<div class="fb" style="left:923px;top:381px;width:14px;height:17px;"><svg width="14" height="17" viewBox="0 0 14 17"><path d="M3.300 5.300 L10.700 12.700 M10.700 5.300 L3.300 12.700" stroke="#5c4808" stroke-width="1.700" fill="none"/></svg></div>
<div class="fb" style="left:938px;top:381px;width:14px;height:17px;border-radius:0 3px 3px 0;"><svg width="14" height="17" viewBox="0 0 14 17"><circle cx="5.600" cy="7.100" r="3.200" stroke="#5e4a08" stroke-width="1.300" fill="none"/><path d="M7.800 9.400 L11.300 12.600" stroke="#5e4a08" stroke-width="1.900"/></svg></div>
<div class="t " style="left:633px;top:383px;transform:scaleX(0.906);">Шкляров Андрей Лукич</div>
<div class="t " style="left:426px;top:407px;transform:scaleX(0.935);">Срок полезного использования мес.:</div>
<div class="f" style="left:630px;top:404px;width:98px;height:17px"></div>
<div class="t " style="right:247px;top:407px;transform-origin:100% 0;transform:scaleX(0.915);">60</div>
<div class="t hd" style="left:426px;top:428px;">Принятие к учету</div>
<div class="" style="position:absolute;left:426px;top:442px;width:528px;height:1px;background:#b9b28c;"></div>
<div class="t " style="left:426px;top:449px;transform:scaleX(0.9);">Первоначальная</div>
<div class="t " style="left:426px;top:462px;transform:scaleX(0.931);">стоимость (БУ):</div>
<div class="f" style="left:541px;top:454px;width:118px;height:17px"></div>
<div class="t " style="right:316px;top:457px;transform-origin:100% 0;transform:scaleX(0.915);">490 000,00</div>
<div class="t " style="left:711px;top:457px;transform:scaleX(0.925);">Дата принятия к учету:</div>
<div class="f" style="left:834px;top:454px;width:118px;height:17px"></div>
<div class="fb" style="left:938px;top:455px;width:14px;height:17px;border-radius:0 3px 3px 0;"><svg width="14" height="17" viewBox="0 0 14 17"><rect x="4.500" y="3.500" width="8" height="9" fill="#efe6bb" stroke="#6a5208"/><rect x="2.500" y="5.500" width="8" height="9" fill="#efe6bb" stroke="#6a5208"/><path d="M2.500 7.500h8M2.500 9.500h8M2.500 11.500h8M2.500 13h8M5.500 5.500v9M8 5.500v9" stroke="#6a5208" stroke-width="1"/></svg></div>
<div class="t " style="left:837px;top:457px;transform:scaleX(0.896);">28.07.2010</div>
<div class="t " style="left:426px;top:484px;transform:scaleX(0.898);">Название документа:</div>
<div class="f" style="left:541px;top:481px;width:158px;height:17px"></div>
<div class="fb" style="left:685px;top:482px;width:14px;height:17px;border-radius:0 3px 3px 0;"><svg width="14" height="17" viewBox="0 0 14 17"><path d="M3.300 5.300 L10.700 12.700 M10.700 5.300 L3.300 12.700" stroke="#5c4808" stroke-width="1.700" fill="none"/></svg></div>
<div class="t " style="left:544px;top:484px;transform:scaleX(0.917);">акт приемки-передачи</div>
<div class="t " style="left:711px;top:484px;transform:scaleX(0.921);">Номер документа:</div>
<div class="f" style="left:834px;top:481px;width:118px;height:17px"></div>
<div class="fb" style="left:938px;top:482px;width:14px;height:17px;border-radius:0 3px 3px 0;"><svg width="14" height="17" viewBox="0 0 14 17"><path d="M3.300 5.300 L10.700 12.700 M10.700 5.300 L3.300 12.700" stroke="#5c4808" stroke-width="1.700" fill="none"/></svg></div>
<div class="t " style="left:837px;top:484px;transform:scaleX(0.824);">25</div>
<div class="t " style="left:426px;top:509px;transform:scaleX(0.886);">Событие:</div>
<div class="f" style="left:541px;top:506px;width:158px;height:17px"></div>
<div class="fb" style="left:655px;top:507px;width:14px;height:17px;"><svg width="14" height="17" viewBox="0 0 14 17"><rect x="2" y="12" width="2" height="2" fill="#5a4706"/><rect x="6" y="12" width="2" height="2" fill="#5a4706"/><rect x="10" y="12" width="2" height="2" fill="#5a4706"/></svg></div>
<div class="fb" style="left:670px;top:507px;width:14px;height:17px;"><svg width="14" height="17" viewBox="0 0 14 17"><path d="M3.300 5.300 L10.700 12.700 M10.700 5.300 L3.300 12.700" stroke="#5c4808" stroke-width="1.700" fill="none"/></svg></div>
<div class="fb" style="left:685px;top:507px;width:14px;height:17px;border-radius:0 3px 3px 0;"><svg width="14" height="17" viewBox="0 0 14 17"><circle cx="5.600" cy="7.100" r="3.200" stroke="#5e4a08" stroke-width="1.300" fill="none"/><path d="M7.800 9.400 L11.300 12.600" stroke="#5e4a08" stroke-width="1.900"/></svg></div>
<div class="t " style="left:544px;top:509px;transform:scaleX(0.911);">Принятие к учету</div>
<div class="t " style="left:711px;top:509px;transform:scaleX(0.906);">Способ поступления:</div>
<div class="f" style="left:834px;top:506px;width:118px;height:17px"></div>
<div class="fb" style="left:923px;top:507px;width:14px;height:17px;"><svg width="14" height="17" viewBox="0 0 14 17"><rect x="2" y="12" width="2" height="2" fill="#5a4706"/><rect x="6" y="12" width="2" height="2" fill="#5a4706"/><rect x="10" y="12" width="2" height="2" fill="#5a4706"/></svg></div>
<div class="fb" style="left:938px;top:507px;width:14px;height:17px;border-radius:0 3px 3px 0;"><svg width="14" height="17" viewBox="0 0 14 17"><path d="M3.300 5.300 L10.700 12.700 M10.700 5.300 L3.300 12.700" stroke="#5c4808" stroke-width="1.700" fill="none"/></svg></div>
<div class="t " style="left:837px;top:509px;transform:scaleX(0.898);">Иное</div>
<div class="t hd" style="left:426px;top:533px;transform:scaleX(1.01);">Стоимость на момент ввода остатков</div>
<div class="" style="position:absolute;left:426px;top:547px;width:528px;height:1px;background:#b9b28c;"></div>
<div class="t " style="left:426px;top:553px;transform:scaleX(0.916);">Стоимость на момент</div>
<div class="t " style="left:426px;top:566px;transform:scaleX(0.932);">ввода остатков (БУ):</div>
<div class="f" style="left:541px;top:559px;width:118px;height:17px"></div>
<div class="t " style="right:316px;top:562px;transform-origin:100% 0;transform:scaleX(0.915);">490 000,00</div>
<div class="t " style="left:711px;top:562px;transform:scaleX(0.902);">Счет учета актива (БУ):</div>
<div class="f" style="left:834px;top:559px;width:78px;height:17px"></div>
<div class="fb" style="left:883px;top:560px;width:14px;height:17px;"><svg width="14" height="17" viewBox="0 0 14 17"><path d="M3 6.500 L12 6.500 L7.500 11 Z" fill="#5a4706"/></svg></div>
<div class="fb" style="left:898px;top:560px;width:14px;height:17px;border-radius:0 3px 3px 0;"><svg width="14" height="17" viewBox="0 0 14 17"><path d="M3.300 5.300 L10.700 12.700 M10.700 5.300 L3.300 12.700" stroke="#5c4808" stroke-width="1.700" fill="none"/></svg></div>
<div class="t " style="left:837px;top:562px;transform:scaleX(0.925);">2410</div>
<div class="t hd" style="left:426px;top:589px;transform:scaleX(1.015);">Накопленная амортизация</div>
<div class="" style="position:absolute;left:426px;top:603px;width:528px;height:1px;background:#b9b28c;"></div>
<div class="t " style="left:426px;top:609px;transform:scaleX(0.905);">Сумма накопленной</div>
<div class="t " style="left:426px;top:622px;transform:scaleX(0.909);">амортизации (БУ):</div>
<div class="f" style="left:541px;top:614px;width:118px;height:17px"></div>
<div class="t " style="right:316px;top:617px;transform-origin:100% 0;transform:scaleX(0.915);">49 000,00</div>
<div class="t " style="left:711px;top:610px;transform:scaleX(0.886);">Счет начисления</div>
<div class="t " style="left:711px;top:623px;transform:scaleX(0.912);">амортизации (БУ):</div>
<div class="f" style="left:834px;top:614px;width:78px;height:17px"></div>
<div class="fb" style="left:883px;top:615px;width:14px;height:17px;"><svg width="14" height="17" viewBox="0 0 14 17"><path d="M3 6.500 L12 6.500 L7.500 11 Z" fill="#5a4706"/></svg></div>
<div class="fb" style="left:898px;top:615px;width:14px;height:17px;border-radius:0 3px 3px 0;"><svg width="14" height="17" viewBox="0 0 14 17"><path d="M3.300 5.300 L10.700 12.700 M10.700 5.300 L3.300 12.700" stroke="#5c4808" stroke-width="1.700" fill="none"/></svg></div>
<div class="t " style="left:837px;top:617px;transform:scaleX(0.925);">2420</div>
<div class="" style="position:absolute;left:412px;top:680px;width:558px;height:1px;background:#b9b28e;"></div>
<div class="" style="position:absolute;left:412px;top:681px;width:558px;height:25px;background:#f5f2de;"></div>
<div class="t b" style="left:837px;top:686px;transform:scaleX(1.028);">OK</div>
<div class="t " style="left:864px;top:686px;transform:scaleX(0.907);">Записать</div>
<div class="t " style="left:921px;top:686px;transform:scaleX(0.919);">Закрыть</div>
</body></html>
